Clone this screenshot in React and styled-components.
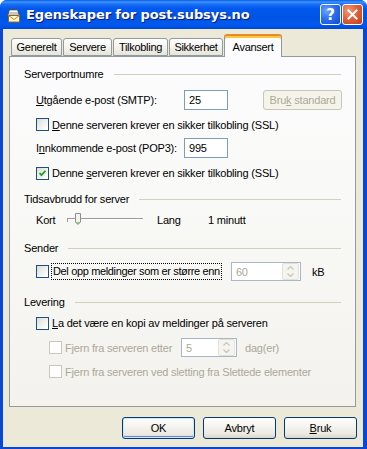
import React from "react";
import styled, { createGlobalStyle } from "styled-components";

const GlobalStyle = createGlobalStyle`
  html, body { margin: 0; padding: 0; background: #ffffff; }
  body {
    font-family: "Liberation Sans", Arial, sans-serif;
    font-size: 11px;
    letter-spacing: -0.2px;
    color: #000;
  }
`;

const Window = styled.div`
  width: 367px;
  height: 449px;
  box-sizing: border-box;
  display: flex;
  flex-direction: column;
  background: #0847d8;
  border-radius: 7px 7px 0 0;
  overflow: hidden;
  padding: 0 4px 2px 3px;
`;

const TitleBar = styled.div`
  height: 29px;
  flex: none;
  display: flex;
  align-items: center;
  margin: 0 -4px 0 -3px;
  padding: 0 4px 0 5px;
  background: linear-gradient(
    to bottom,
    #0a5ae6 0%,
    #3d95ff 7%,
    #1a6ff5 14%,
    #0058ee 30%,
    #0054e3 62%,
    #0059ef 85%,
    #0048d8 100%
  );
`;

const Title = styled.div`
  flex: 1;
  margin-left: 5px;
  font-family: "DejaVu Sans", sans-serif;
  font-weight: bold;
  font-size: 13px;
  letter-spacing: -0.1px;
  color: #fff;
  text-shadow: 1px 1px 0 #0a1883;
  white-space: nowrap;
`;

const CaptionButton = styled.div`
  width: 21px;
  height: 21px;
  box-sizing: border-box;
  margin-left: 1px;
  border: 1px solid #fff;
  border-radius: 3px;
  display: flex;
  align-items: center;
  justify-content: center;
  background: ${(p) =>
    p.$close
      ? "radial-gradient(circle at 30% 30%, #f09a7a 0%, #e1603a 45%, #c43e15 100%)"
      : "radial-gradient(circle at 30% 30%, #6ea6ff 0%, #2c6ff0 45%, #1447cc 100%)"};
  color: #fff;
  font-family: "DejaVu Sans", sans-serif;
  font-weight: bold;
  font-size: 15px;
  letter-spacing: 0;
`;

const Client = styled.div`
  flex: 1;
  display: flex;
  flex-direction: column;
  background: #ece9d8;
  padding: 6px 7px 0 6px;
`;

const TabStrip = styled.div`
  height: 21px;
  display: flex;
  align-items: flex-end;
  gap: 1px;
  padding-left: 2px;
  position: relative;
  z-index: 1;
`;

const Tab = styled.div`
  width: ${(p) => p.$w}px;
  box-sizing: border-box;
  height: ${(p) => (p.$active ? 22 : 18)}px;
  margin-bottom: ${(p) => (p.$active ? -1 : 0)}px;
  border: 1px solid #919b9c;
  border-bottom: ${(p) => (p.$active ? "none" : "1px solid #919b9c")};
  border-radius: 3px 3px 0 0;
  display: flex;
  align-items: center;
  justify-content: center;
  padding-top: ${(p) => (p.$active ? 1 : 0)}px;
  letter-spacing: -0.3px;
  background: ${(p) =>
    p.$active ? "#fcfcfe" : "linear-gradient(to bottom, #ffffff, #f1f0ea 60%, #e6e4da)"};
  box-shadow: ${(p) => (p.$active ? "inset 0 2px 0 #ffc83c, 0 -1px 0 #e68b2c" : "none")};
  border-top-color: ${(p) => (p.$active ? "#e68b2c" : "#919b9c")};
`;

const Panel = styled.div`
  height: 351px;
  box-sizing: border-box;
  border: 1px solid #919b9c;
  background: linear-gradient(to bottom, #fcfcfe 0%, #f8f8f5 50%, #f3f2ed 100%);
  padding: 7px 14px 0 14px;
  display: flex;
  flex-direction: column;
`;

const GroupHeader = styled.div`
  height: 20px;
  margin-top: ${(p) => p.$mt || 0}px;
  display: flex;
  align-items: center;
  &::after {
    content: "";
    flex: 1;
    height: 1px;
    margin-left: 10px;
    background: #d0d0bf;
  }
`;

const Row = styled.div`
  height: ${(p) => p.$h}px;
  margin-top: ${(p) => p.$mt || 0}px;
  padding-left: ${(p) => p.$indent || 12}px;
  display: flex;
  align-items: center;
  color: ${(p) => (p.$disabled ? "#aca899" : "#000")};
  white-space: nowrap;
`;

const FieldLabel = styled.span`
  width: ${(p) => p.$w}px;
  flex: none;
`;

const Key = styled.span`
  text-decoration: underline;
`;

const TextBox = styled.div`
  width: ${(p) => p.$w}px;
  height: ${(p) => p.$h || 20}px;
  box-sizing: border-box;
  border: 1px solid ${(p) => (p.$disabled ? "#a9b6c8" : "#7f9db9")};
  background: #fff;
  color: ${(p) => (p.$disabled ? "#aca899" : "#000")};
  padding-left: 4px;
  display: flex;
  align-items: center;
  flex: none;
  margin-left: ${(p) => p.$ml || 0}px;
`;

const SpinText = styled.span`
  flex: 1;
`;

const SpinButtons = styled.div`
  width: 15px;
  height: 15px;
  margin-right: 1px;
  border: 1px solid #e3e1d8;
  border-radius: 2px;
  background: #f5f4ef;
  display: flex;
  flex-direction: column;
  align-items: center;
  justify-content: space-evenly;
`;

const XPButton = styled.div`
  width: ${(p) => p.$w || 73}px;
  height: ${(p) => p.$h || 22}px;
  box-sizing: border-box;
  flex: none;
  margin-left: ${(p) => p.$ml || 0}px;
  border: 1px solid ${(p) => (p.$disabled ? "#c9c7ba" : "#003c74")};
  border-radius: 3px;
  display: flex;
  align-items: center;
  justify-content: center;
  color: ${(p) => (p.$disabled ? "#aca899" : "#000")};
  background: ${(p) =>
    p.$disabled
      ? "#f5f4ea"
      : "linear-gradient(to bottom, #ffffff 0%, #f5f4ef 40%, #ebe9e1 80%, #d8d4c8 100%)"};
  box-shadow: ${(p) =>
    p.$default ? "inset 0 0 0 1px #cee7ff, inset 0 -1px 0 1px #6982ee" : "none"};
`;

const Box = styled.span`
  width: 13px;
  height: 13px;
  box-sizing: border-box;
  flex: none;
  border: 1px solid ${(p) => (p.$disabled ? "#cac8bb" : "#1c5180")};
  background: ${(p) =>
    p.$disabled ? "#fff" : "linear-gradient(135deg, #dcdcd7 0%, #f0f0ec 50%, #ffffff 90%)"};
  display: flex;
  align-items: center;
  justify-content: center;
  margin-right: 3px;
`;

const FocusLabel = styled.span`
  flex: none;
  outline: 1px dotted #000;
  outline-offset: 0;
  padding: 1px;
  line-height: 13px;
  letter-spacing: -0.35px;
`;

const SliderTrack = styled.div`
  width: 76px;
  flex: none;
  height: 20px;
  display: flex;
  align-items: center;
`;

const ButtonBar = styled.div`
  display: flex;
  justify-content: flex-end;
  gap: 8px;
  margin-top: 10px;
  margin-right: -1px;
`;

const Check = () => (
  <svg width="7" height="7" viewBox="0 0 7 7">
    <path d="M0.5 3 L2.5 5.2 L6.5 0.8" fill="none" stroke="#21a121" strokeWidth="1.8" />
  </svg>
);

const CheckBox = ({ checked, disabled }) => (
  <Box $disabled={disabled}>{checked && <Check />}</Box>
);

const Arrow = ({ up }) => (
  <svg width="7" height="4" viewBox="0 0 7 4">
    <path
      d={up ? "M0.5 3.5 L3.5 0.5 L6.5 3.5" : "M0.5 0.5 L3.5 3.5 L6.5 0.5"}
      fill="none"
      stroke="#c9c7ba"
      strokeWidth="1.3"
    />
  </svg>
);

const Spin = ({ value, w, ml }) => (
  <TextBox $w={w} $h={19} $ml={ml} $disabled>
    <SpinText>{value}</SpinText>
    <SpinButtons>
      <Arrow up />
      <Arrow />
    </SpinButtons>
  </TextBox>
);

const MailIcon = () => (
  <svg width="16" height="16" viewBox="0 0 16 16">
    <path d="M2.5 8.5 L4.5 2.5 H12.5 L14.5 8.5 Z" fill="#c4c8cc" stroke="#4a4f57" />
    <path d="M4.5 4.5 H12.5" stroke="#ffffff" />
    <rect x="3.5" y="8.5" width="11" height="6.5" fill="#fff7cf" stroke="#8d6a20" />
    <path d="M3.5 8.5 L9 12.5 L14.5 8.5" fill="none" stroke="#c48a2a" />
  </svg>
);

const CloseX = () => (
  <svg width="11" height="11" viewBox="0 0 11 11">
    <path d="M1.5 1.5 L9.5 9.5 M9.5 1.5 L1.5 9.5" stroke="#fff" strokeWidth="2" strokeLinecap="square" />
  </svg>
);

const Slider = () => (
  <SliderTrack>
    <svg width="76" height="20" viewBox="0 0 76 20">
      <rect x="0" y="8" width="76" height="1" fill="#9d9c99" />
      <rect x="0" y="9" width="76" height="1" fill="#ffffff" />
      <rect x="0" y="9" width="1" height="3" fill="#9d9c99" />
      <path
        d="M8.5 3.5 H13.5 V12 L11 14.5 L8.5 12 Z"
        fill="#f4f3ee"
        stroke="#8e8f8f"
      />
      <path d="M9.5 12 L11 13.5 L12.5 12" fill="none" stroke="#21c121" />
    </svg>
  </SliderTrack>
);

const tabs = [
  ["Generelt", 51],
  ["Servere", 49],
  ["Tilkobling", 55],
  ["Sikkerhet", 54],
  ["Avansert", 58, true],
];

export default function App() {
  return (
    <>
      <GlobalStyle />
      <Window>
        <TitleBar>
          <MailIcon />
          <Title>Egenskaper for post.subsys.no</Title>
          <CaptionButton>?</CaptionButton>
          <CaptionButton $close>
            <CloseX />
          </CaptionButton>
        </TitleBar>
        <Client>
          <TabStrip>
            {tabs.map(([name, w, active]) => (
              <Tab key={name} $w={w} $active={active}>
                {name}
              </Tab>
            ))}
          </TabStrip>
          <Panel>
            <GroupHeader>Serverportnumre</GroupHeader>
            <Row $h={21} $mt={5}>
              <FieldLabel $w={148}>
                <Key>U</Key>tgående e-post (SMTP):
              </FieldLabel>
              <TextBox $w={44}>25</TextBox>
              <XPButton $w={79} $h={20} $ml={35} $disabled>
                Bru<Key>k</Key>&nbsp;standard
              </XPButton>
            </Row>
            <Row $h={15} $mt={7}>
              <CheckBox />
              <span>
                <Key>D</Key>enne serveren krever en sikker tilkobling (SSL)
              </span>
            </Row>
            <Row $h={21} $mt={5}>
              <FieldLabel $w={148}>
                I<Key>n</Key>nkommende e-post (POP3):
              </FieldLabel>
              <TextBox $w={44}>995</TextBox>
            </Row>
            <Row $h={16} $mt={7}>
              <CheckBox checked />
              <span>
                Denne <Key>s</Key>erveren krever en sikker tilkobling (SSL)
              </span>
            </Row>

            <GroupHeader $mt={8}>Tidsavbrudd for server</GroupHeader>
            <Row $h={20} $mt={1}>
              <FieldLabel $w={31}>Kort</FieldLabel>
              <Slider />
              <FieldLabel $w={51} style={{ marginLeft: 14 }}>
                Lang
              </FieldLabel>
              <span>1 minutt</span>
            </Row>

            <GroupHeader $mt={8}>Sender</GroupHeader>
            <Row $h={21} $mt={3}>
              <CheckBox />
              <FocusLabel>Del opp meldinger som er større enn</FocusLabel>
              <Spin value="60" w={70} ml={10} />
              <span style={{ marginLeft: 11 }}>kB</span>
            </Row>

            <GroupHeader $mt={10}>Levering</GroupHeader>
            <Row $h={16} $mt={3}>
              <CheckBox />
              <span>
                <Key>L</Key>a det være en kopi av meldinger på serveren
              </span>
            </Row>
            <Row $h={21} $mt={6} $indent={25} $disabled>
              <CheckBox disabled />
              <FieldLabel $w={116}>
                F<Key>j</Key>ern fra serveren etter
              </FieldLabel>
              <Spin value="5" w={56} />
              <span style={{ marginLeft: 8 }}>dag(er)</span>
            </Row>
            <Row $h={15} $mt={6} $indent={25} $disabled>
              <CheckBox disabled />
              <span>
                F<Key>j</Key>ern fra serveren ved sletting fra Slettede elementer
              </span>
            </Row>
          </Panel>
          <ButtonBar>
            <XPButton $default>OK</XPButton>
            <XPButton>Avbryt</XPButton>
            <XPButton>
              <Key>B</Key>ruk
            </XPButton>
          </ButtonBar>
        </Client>
      </Window>
    </>
  );
}
